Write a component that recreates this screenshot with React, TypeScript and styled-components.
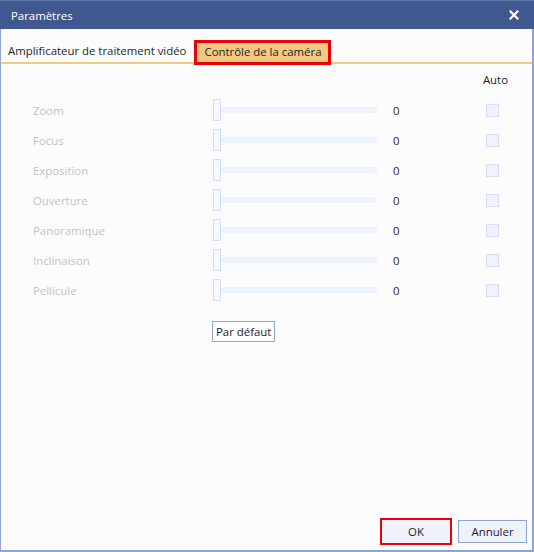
import React, { useState } from "react";
import styled, { createGlobalStyle } from "styled-components";

const GlobalStyle = createGlobalStyle`
  html, body {
    margin: 0;
    padding: 0;
    background: #ffffff;
  }
  body {
    font-family: "Segoe UI", "Open Sans", "Noto Sans", sans-serif;
    font-size: 11.4px;
    color: #1e1e1e;
  }
`;

interface Control {
  label: string;
  value: number;
}

const CONTROLS: Control[] = [
  { label: "Zoom", value: 0 },
  { label: "Focus", value: 0 },
  { label: "Exposition", value: 0 },
  { label: "Ouverture", value: 0 },
  { label: "Panoramique", value: 0 },
  { label: "Inclinaison", value: 0 },
  { label: "Pellicule", value: 0 },
];

const TABS = ["Amplificateur de traitement vidéo", "Contrôle de la caméra"];

const App = () => {
  const [activeTab, setActiveTab] = useState<number>(1);

  return (
    <>
      <GlobalStyle />
      <Dialog>
        <TitleBar>
          <Title>Paramètres</Title>
          <CloseButton aria-label="Fermer">
            <svg width="10" height="10" viewBox="0 0 10 10">
              <path
                d="M1.5 1.5 L8.5 8.5 M8.5 1.5 L1.5 8.5"
                stroke="#ffffff"
                strokeWidth="2.2"
                strokeLinecap="square"
              />
            </svg>
          </CloseButton>
        </TitleBar>

        <TabStrip>
          {TABS.map((tab, i) => (
            <Tab key={tab} active={i === activeTab} onClick={() => setActiveTab(i)}>
              {tab}
            </Tab>
          ))}
        </TabStrip>

        <Content>
          <AutoHeader>Auto</AutoHeader>
          {CONTROLS.map((c) => (
            <Row key={c.label}>
              <Label>{c.label}</Label>
              <Slider>
                <Thumb />
                <Track />
              </Slider>
              <Value>{c.value}</Value>
              <Checkbox />
            </Row>
          ))}
          <DefaultButton>Par défaut</DefaultButton>
        </Content>

        <Footer>
          <FooterButton highlighted>OK</FooterButton>
          <FooterButton>Annuler</FooterButton>
        </Footer>
      </Dialog>
    </>
  );
};

export default App;

const Dialog = styled.div`
  box-sizing: border-box;
  width: 534px;
  height: 552px;
  display: flex;
  flex-direction: column;
  background: #fcfcfd;
  border: 1px solid #8fa5d1;
  border-top: none;
  border-bottom-width: 2px;
  border-right-width: 2px;
`;

const TitleBar = styled.div`
  height: 29px;
  flex-shrink: 0;
  display: flex;
  align-items: center;
  justify-content: space-between;
  padding: 0 14px 0 11px;
  margin: 0 -2px 0 -1px;
  background: #3f5990;
  border-top: 1px solid #6079ad;
  box-sizing: border-box;
`;

const Title = styled.span`
  color: #ffffff;
`;

const CloseButton = styled.div`
  display: flex;
  align-items: center;
  justify-content: center;
  width: 12px;
  height: 12px;
`;

const TabStrip = styled.div`
  display: flex;
  align-items: flex-end;
  gap: 2px;
  height: 33px;
  padding-left: 5px;
  border-bottom: 2px solid #f2c97e;
  flex-shrink: 0;
`;

const Tab = styled.div<{ active?: boolean }>`
  height: 21px;
  line-height: 20px;
  padding: 0 8px 0 ${(p) => (p.active ? "8px" : "2px")};
  cursor: pointer;
  white-space: nowrap;
  background: ${(p) => (p.active ? "#f3c982" : "transparent")};
  outline: ${(p) => (p.active ? "3px solid #e8000b" : "none")};
  outline-offset: -1px;
  position: relative;
  top: ${(p) => (p.active ? "1px" : "0")};
`;

const Content = styled.div`
  flex: 1;
  display: flex;
  flex-direction: column;
  padding-left: 32px;
`;

const AutoHeader = styled.div`
  height: 31px;
  line-height: 31px;
  align-self: flex-end;
  padding-right: 24px;
`;

const Row = styled.div`
  display: grid;
  grid-template-columns: 180px 164px 109px 13px;
  align-items: center;
  height: 30px;
`;

const Label = styled.span`
  color: #c2c2c2;
`;

const Slider = styled.div`
  display: flex;
  align-items: center;
  height: 22px;
`;

const Thumb = styled.div`
  box-sizing: border-box;
  width: 8px;
  height: 22px;
  background: #f7f9ff;
  border: 1px solid #d3dcf5;
  flex-shrink: 0;
`;

const Track = styled.div`
  flex: 1;
  height: 6px;
  background: #eef2fb;
`;

const Value = styled.span`
  padding-left: 16px;
  color: #1e1e1e;
`;

const Checkbox = styled.div`
  box-sizing: border-box;
  width: 13px;
  height: 13px;
  background: #f0f3fd;
  border: 1px solid #d6def5;
`;

const DefaultButton = styled.div`
  box-sizing: border-box;
  align-self: flex-start;
  margin: 16px 0 0 179px;
  height: 21px;
  line-height: 19px;
  padding: 0 3px;
  border: 1px solid #8fa5d1;
  background: #fdfdfe;
  color: #1e1e1e;
`;

const Footer = styled.div`
  display: flex;
  justify-content: flex-end;
  gap: 6px;
  padding: 0 5px 7px 0;
`;

const FooterButton = styled.div<{ highlighted?: boolean }>`
  box-sizing: border-box;
  width: ${(p) => (p.highlighted ? "68px" : "69px")};
  height: 23px;
  line-height: 21px;
  text-align: center;
  background: #eff2fa;
  border: 1px solid ${(p) => (p.highlighted ? "#eff2fa" : "#8fa5d1")};
  outline: ${(p) => (p.highlighted ? "2px solid #e8000b" : "none")};
  outline-offset: 0;
  margin-right: ${(p) => (p.highlighted ? "2px" : "0")};
`;
